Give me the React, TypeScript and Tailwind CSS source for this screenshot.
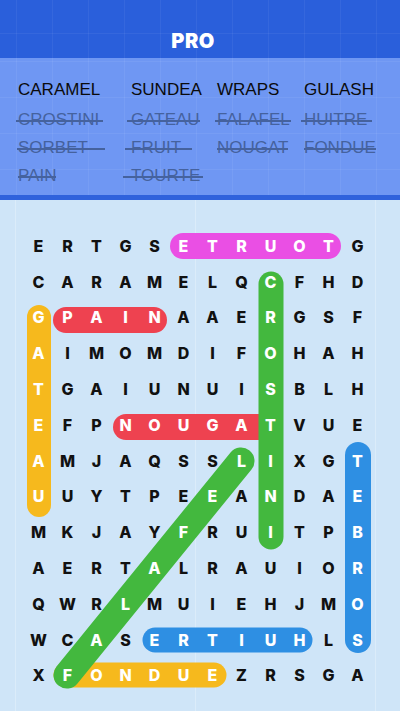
import React from 'react';

const GRID = [
  'ERTGSETRUOTG',
  'CARAMELQCFHD',
  'GPAINAAERGSF',
  'AIMOMDIFOHAH',
  'TGAIUNUISBLH',
  'EFPNOUGATVUE',
  'AMJAQSSLIXGT',
  'UUYTPEEANDAE',
  'MKJAYFRUITPB',
  'AERTALRAUIOR',
  'QWRLMUIEHJMO',
  'WCASERTIUHLS',
  'XFONDUEZRSGA',
];

// found words, drawn as thick round strokes in grid pixel coords
const bands = [
  { x1: 159, y1: 18, x2: 304, y2: 18, w: 26, color: '#ea4fe4' },
  { x1: 42, y1: 92, x2: 130, y2: 92, w: 26, color: '#ee4250' },
  { x1: 102, y1: 199, x2: 240, y2: 199, w: 26, color: '#ee4250' },
  { x1: 15, y1: 89, x2: 15, y2: 277, w: 24, color: '#f6b91d' },
  { x1: 247, y1: 56, x2: 247, y2: 309, w: 25, color: '#43b83e' },
  { x1: 334, y1: 227, x2: 334, y2: 412, w: 26, color: '#2e8fe3' },
  { x1: 131, y1: 412, x2: 276, y2: 412, w: 25, color: '#2e8fe3' },
  { x1: 42, y1: 447, x2: 190, y2: 447, w: 25, color: '#f6b91d' },
  { x1: 217, y1: 233, x2: 43, y2: 447, w: 27, color: '#43b83e' },
];

const found = new Set<string>();
const mark = (cells: [number, number][]) => cells.forEach(([r, c]) => found.add(`${r}-${c}`));
mark([5, 6, 7, 8, 9, 10].map((c) => [0, c]));
mark([1, 2, 3, 4, 5, 6, 7, 8].map((r) => [r, 8]));
mark([2, 3, 4, 5, 6, 7].map((r) => [r, 0]));
mark([1, 2, 3, 4].map((c) => [2, c]));
mark([3, 4, 5, 6, 7, 8].map((c) => [5, c]));
mark([6, 7, 8, 9, 10, 11].map((r) => [r, 11]));
mark([4, 5, 6, 7, 8, 9].map((c) => [11, c]));
mark([1, 2, 3, 4, 5, 6].map((c) => [12, c]));
mark([0, 1, 2, 3, 4, 5, 6].map((i) => [6 + i, 7 - i]));

type Word = { text: string; done?: boolean; line?: string };

const columns: Word[][] = [
  [
    { text: 'CARAMEL' },
    { text: 'CROSTINI', done: true, line: '-left-[2px] right-[-4px]' },
    { text: 'SORBET', done: true, line: '-left-[1px] right-[-17px]' },
    { text: 'PAIN', done: true, line: 'left-0 right-0' },
  ],
  [
    { text: 'SUNDEA' },
    { text: 'GATEAU', done: true, line: '-left-[4px] right-0' },
    { text: 'FRUIT', done: true, line: '-left-[6px] right-[-11px]' },
    { text: 'TOURTE', done: true, line: '-left-[8px] right-[-3px]' },
  ],
  [
    { text: 'WRAPS' },
    { text: 'FALAFEL', done: true, line: '-left-[2px] right-[-1px]' },
    { text: 'NOUGAT', done: true, line: 'left-0 right-0' },
  ],
  [
    { text: 'GULASH' },
    { text: 'HUITRE', done: true, line: '-left-[3px] right-[-5px]' },
    { text: 'FONDUE', done: true, line: 'left-0 right-0' },
  ],
];

function WordItem({ word }: { word: Word }) {
  if (!word.done) {
    return <div className="h-[28px] leading-[28px] text-[#0b0b0b] mt-[1px] mb-[2px]">{word.text}</div>;
  }
  return (
    <div className="h-[28px] leading-[28px]">
      <span className="relative text-[#45629e]">
        {word.text}
        <span className={`absolute top-[50%] h-[2px] bg-[#45629e] ${word.line}`} />
      </span>
    </div>
  );
}

export default function App() {
  return (
    <div className="w-[400px] h-[711px] overflow-hidden bg-[#cfe5f8] bg-[linear-gradient(to_right,rgba(255,255,255,0.25)_1px,transparent_1px)] bg-[size:180px_100%] bg-[position:15px_0]">
      <div className="h-[58px] bg-[#2a5fdb] bg-[linear-gradient(to_right,rgba(255,255,255,0.05)_1px,transparent_1px),linear-gradient(to_bottom,rgba(255,255,255,0.05)_1px,transparent_1px)] bg-[size:36px_36px] bg-[position:16px_-3px] flex justify-center pr-[14px] pt-[29px]">
        <span className="text-white text-[20px] leading-[24px] font-black tracking-[0.5px] font-['Inter',sans-serif]">
          PRO
        </span>
      </div>

      <div className="h-[142px] bg-[#6f97f3] bg-[linear-gradient(to_right,rgba(255,255,255,0.06)_1px,transparent_1px),linear-gradient(to_bottom,rgba(255,255,255,0.06)_1px,transparent_1px)] bg-[size:36px_36px] bg-[position:16px_3px] border-b-[5px] border-[#2f62dc]">
        <div className="grid grid-cols-[113px_86px_87px_96px] pl-[18px] pt-[17px] text-[17px] font-['Liberation_Sans',Arial,sans-serif] whitespace-nowrap">
          {columns.map((col, i) => (
            <div key={i} className="flex flex-col">
              {col.map((w) => (
                <WordItem key={w.text} word={w} />
              ))}
            </div>
          ))}
        </div>
      </div>

      <div className="pt-[28px] pl-[24px]">
        <div className="relative w-[348px]">
          <svg className="absolute inset-0 w-[348px] h-[466px]" viewBox="0 0 348 466">
            {bands.map((b, i) => (
              <line
                key={i}
                x1={b.x1}
                y1={b.y1}
                x2={b.x2}
                y2={b.y2}
                stroke={b.color}
                strokeWidth={b.w}
                strokeLinecap="round"
              />
            ))}
          </svg>
          <div className="relative flex flex-col font-['Inter',sans-serif] font-extrabold text-[16px]">
            {GRID.map((row, r) => (
              <div key={r} className="flex h-[35.8px]">
                {row.split('').map((ch, c) => (
                  <div
                    key={c}
                    className={`w-[29px] flex items-center justify-center ${
                      found.has(`${r}-${c}`) ? 'text-white' : 'text-[#111111]'
                    }`}
                  >
                    {ch}
                  </div>
                ))}
              </div>
            ))}
          </div>
        </div>
      </div>
    </div>
  );
}
